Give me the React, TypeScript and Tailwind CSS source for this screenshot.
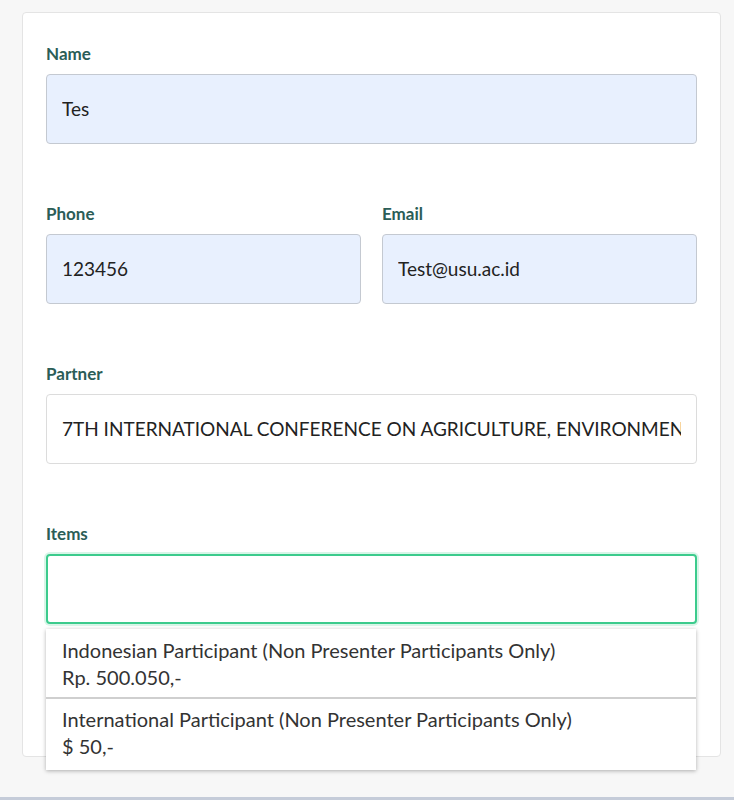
import React from "react";

const font = { fontFamily: "Lato, 'Noto Sans', sans-serif" };

function Label({ children }: { children: React.ReactNode }) {
  return (
    <div className="text-[17px] leading-6 font-bold text-[#2b5d57] mb-2">{children}</div>
  );
}

function Field({ value, fill }: { value: string; fill?: boolean }) {
  return (
    <div
      className={`h-[70px] rounded-[4px] border flex items-center px-[15px] text-[19px] text-[#222] whitespace-nowrap overflow-hidden ${
        fill ? "bg-[#e8f0fe] border-[#c4c9d1]" : "bg-white border-[#dcdcdc]"
      }`}
    >
      <span className="overflow-hidden">{value}</span>
    </div>
  );
}

export default function App() {
  return (
    <div className="min-h-[800px] bg-[#f7f7f7] relative" style={font}>
      <div className="pt-3 px-[22px] pr-[13px]">
        <div className="bg-white border border-[#e4e4e4] rounded-[4px] px-[23px] pt-[29px] pb-[132px]">
          <Label>Name</Label>
          <Field value="Tes" fill />
          <div className="grid grid-cols-2 gap-[21px] mt-[58px]">
            <div>
              <Label>Phone</Label>
              <Field value="123456" fill />
            </div>
            <div>
              <Label>Email</Label>
              <Field value="Test@usu.ac.id" fill />
            </div>
          </div>
          <div className="mt-[58px]">
            <Label>Partner</Label>
            <Field value="7TH INTERNATIONAL CONFERENCE ON AGRICULTURE, ENVIRONMENT AND FOOD SECURITY" />
          </div>
          <div className="mt-[58px] relative">
            <Label>Items</Label>
            <div className="h-[70px] rounded-[4px] border-2 border-[#3ccb8d] bg-white shadow-[0_0_0_2px_rgba(60,203,141,0.2)]" />
            <div className="absolute left-0 right-[1px] top-[107px] bg-white shadow-[0_1px_4px_rgba(0,0,0,0.3)] text-[20px] text-[#333] leading-[27px]">
              <div className="h-[70px] px-4 pt-[8px] border-b-2 border-[#cfcfcf]">
                <div>Indonesian Participant (Non Presenter Participants Only)</div>
                <div>Rp. 500.050,-</div>
              </div>
              <div className="h-[71px] px-4 pt-[7px]">
                <div>International Participant (Non Presenter Participants Only)</div>
                <div>$ 50,-</div>
              </div>
            </div>
          </div>
        </div>
      </div>
      <div className="absolute left-0 right-0 bottom-0 h-[3px] bg-[#c5ccd9]" />
    </div>
  );
}
